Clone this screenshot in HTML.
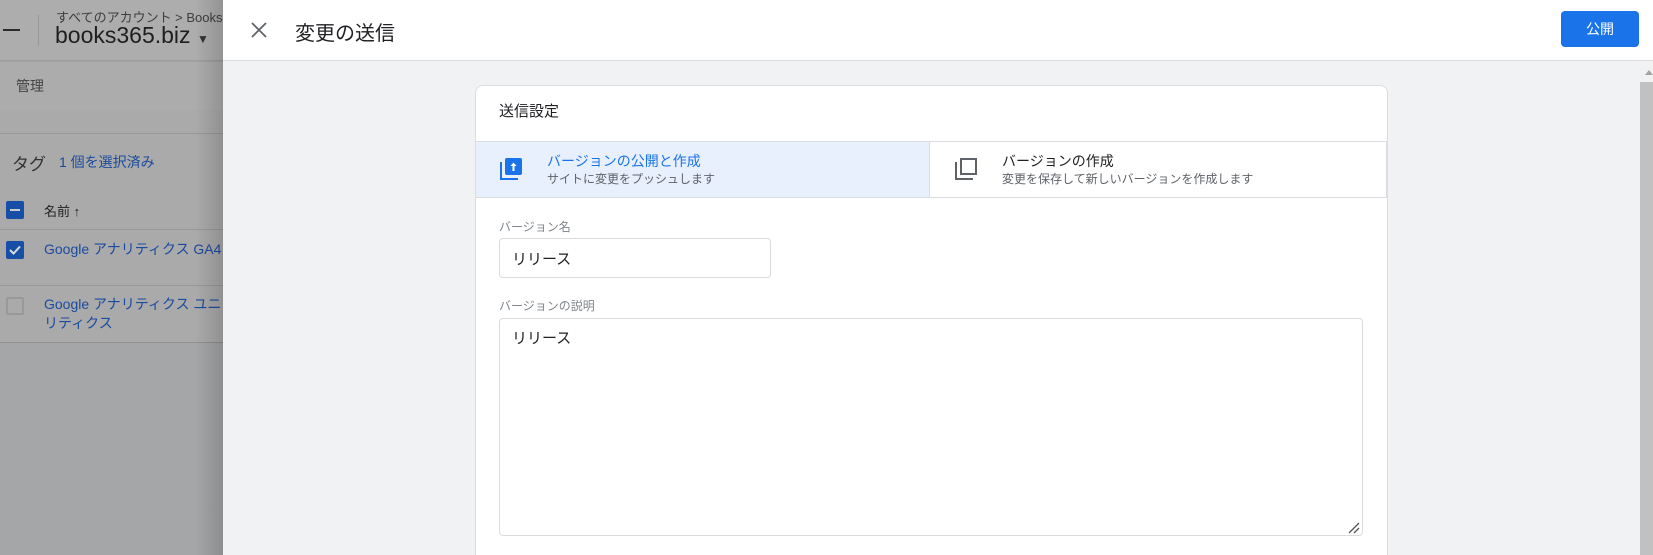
<!DOCTYPE html>
<html><head><meta charset="utf-8"><style>
*{box-sizing:border-box;margin:0;padding:0}
html,body{overflow:hidden}
body{width:1653px;height:555px;position:relative;font-family:"Liberation Sans","Noto Sans CJK JP",sans-serif;background:#a5a6a8}
.a{position:absolute;white-space:nowrap}
</style></head><body>
<div class="a" style="left:0;top:0;width:223px;height:61px;background:#adadad;border-bottom:1px solid #a0a0a0"></div>
<div class="a" style="left:3px;top:29px;width:17px;height:2px;background:#2a2a2a"></div>
<div class="a" style="left:38px;top:15px;width:1px;height:31px;background:#999"></div>
<div class="a" style="left:56px;top:7px;font-size:13px;color:#3d3d3d">すべてのアカウント &gt; Books3</div>
<div class="a" style="left:55px;top:22px;font-size:23px;color:#1f1f1f">books365.biz <span style="font-size:12px;color:#333">▼</span></div>
<div class="a" style="left:0;top:62px;width:223px;height:48px;background:#acacac;box-shadow:0 2px 4px rgba(0,0,0,.25)"></div>
<div class="a" style="left:16px;top:76px;font-size:14px;color:#444">管理</div>
<div class="a" style="left:0;top:110px;width:223px;height:232px;background:#aaaaaa"></div>
<div class="a" style="left:0;top:133px;width:223px;height:1px;background:#999"></div>
<div class="a" style="left:12px;top:150px;font-size:17px;color:#333">タグ</div>
<div class="a" style="left:59px;top:152px;font-size:14px;color:#1a4ba0">1 個を選択済み</div>
<div class="a" style="left:6px;top:201px;width:18px;height:18px;background:#174ea6;border-radius:2px"><div style="position:absolute;left:4px;top:8px;width:10px;height:2px;background:#ccc"></div></div>
<div class="a" style="left:44px;top:201px;font-size:13px;color:#222">名前 ↑</div>
<div class="a" style="left:0;top:229px;width:223px;height:1px;background:#999"></div>
<div class="a" style="left:6px;top:241px;width:18px;height:18px;background:#174ea6;border-radius:2px"><svg width="18" height="18"><path d="M4 9l3.5 3.5L14 5.5" stroke="#ddd" stroke-width="2" fill="none"/></svg></div>
<div class="a" style="left:44px;top:239px;font-size:14px;color:#1a4ba0">Google アナリティクス GA4</div>
<div class="a" style="left:0;top:285px;width:223px;height:1px;background:#999"></div>
<div class="a" style="left:6px;top:297px;width:18px;height:18px;border:2px solid #999;border-radius:2px"></div>
<div class="a" style="left:44px;top:295px;font-size:14px;line-height:19px;color:#1a4ba0">Google アナリティクス ユニ<br>リティクス</div>
<div class="a" style="left:0;top:342px;width:223px;height:1px;background:#8e8f91"></div>
<div class="a" style="left:195px;top:0;width:28px;height:555px;background:linear-gradient(to right,rgba(0,0,0,0),rgba(0,0,0,.15))"></div>
<div class="a" style="left:223px;top:0;width:1430px;height:555px;background:#f1f2f4"></div>
<div class="a" style="left:223px;top:0;width:1430px;height:61px;background:#fff;border-bottom:1px solid #dadce0"></div>
<svg class="a" style="left:251px;top:22px" width="16" height="16"><path d="M1 1L15 15M15 1L1 15" stroke="#5f6368" stroke-width="1.8"/></svg>
<div class="a" style="left:295px;top:17px;font-size:20px;color:#202124">変更の送信</div>
<div class="a" style="left:1561px;top:11px;width:78px;height:36px;background:#1a73e8;border-radius:4px;color:#fff;font-size:14px;text-align:center;line-height:36px">公開</div>
<div class="a" style="left:1640px;top:61px;width:13px;height:494px;background:#f1f1f1"></div>
<div class="a" style="left:1640px;top:82px;width:13px;height:473px;background:#c1c1c1"></div>
<div class="a" style="left:1645px;top:70px;width:0;height:0;border-left:4px solid transparent;border-right:4px solid transparent;border-bottom:5px solid #a3a3a3"></div>
<div class="a" style="left:475px;top:85px;width:913px;height:480px;background:#fff;border:1px solid #dadce0;border-radius:8px 8px 0 0;border-bottom:none"></div>
<div class="a" style="left:499px;top:100px;font-size:15px;color:#202124">送信設定</div>
<div class="a" style="left:475px;top:141px;width:913px;height:57px;border-top:1px solid #dadce0;border-bottom:1px solid #dadce0"></div>
<div class="a" style="left:476px;top:142px;width:454px;height:55px;background:#e8f0fe;border-right:1px solid #dadce0"></div>
<div class="a" style="left:1386px;top:142px;width:2px;height:55px;background:#dadce0"></div>
<svg class="a" style="left:499px;top:157px" width="24" height="24"><path d="M2 5v17h17" stroke="#1a73e8" stroke-width="2" fill="none"/><rect x="6" y="1" width="17" height="17" rx="2" fill="#1a73e8"/><path d="M14.5 14V9h3l-3-3.5-3 3.5h3" fill="#fff"/><rect x="13.5" y="8" width="2" height="6" fill="#fff"/></svg>
<div class="a" style="left:547px;top:151px;font-size:14px;color:#1a73e8">バージョンの公開と作成</div>
<div class="a" style="left:547px;top:170px;font-size:12px;color:#5f6368">サイトに変更をプッシュします</div>
<svg class="a" style="left:954px;top:157px" width="24" height="24"><path d="M2 5v17h17" stroke="#5f6368" stroke-width="2" fill="none"/><rect x="7" y="2" width="15" height="15" stroke="#5f6368" stroke-width="2" fill="none"/></svg>
<div class="a" style="left:1002px;top:151px;font-size:14px;color:#202124">バージョンの作成</div>
<div class="a" style="left:1002px;top:170px;font-size:12px;color:#5f6368">変更を保存して新しいバージョンを作成します</div>
<div class="a" style="left:499px;top:218px;font-size:12px;color:#80868b">バージョン名</div>
<div class="a" style="left:499px;top:238px;width:272px;height:40px;border:1px solid #dadce0;border-radius:4px"></div>
<div class="a" style="left:512px;top:248px;font-size:15px;color:#202124">リリース</div>
<div class="a" style="left:499px;top:297px;font-size:12px;color:#80868b">バージョンの説明</div>
<div class="a" style="left:499px;top:318px;width:864px;height:218px;border:1px solid #dadce0;border-radius:4px"></div>
<div class="a" style="left:512px;top:327px;font-size:15px;color:#202124">リリース</div>
<svg class="a" style="left:1348px;top:522px" width="12" height="12"><path d="M1 11L11 1M6 11L11 6" stroke="#555" stroke-width="1.3"/></svg>
</body></html>
